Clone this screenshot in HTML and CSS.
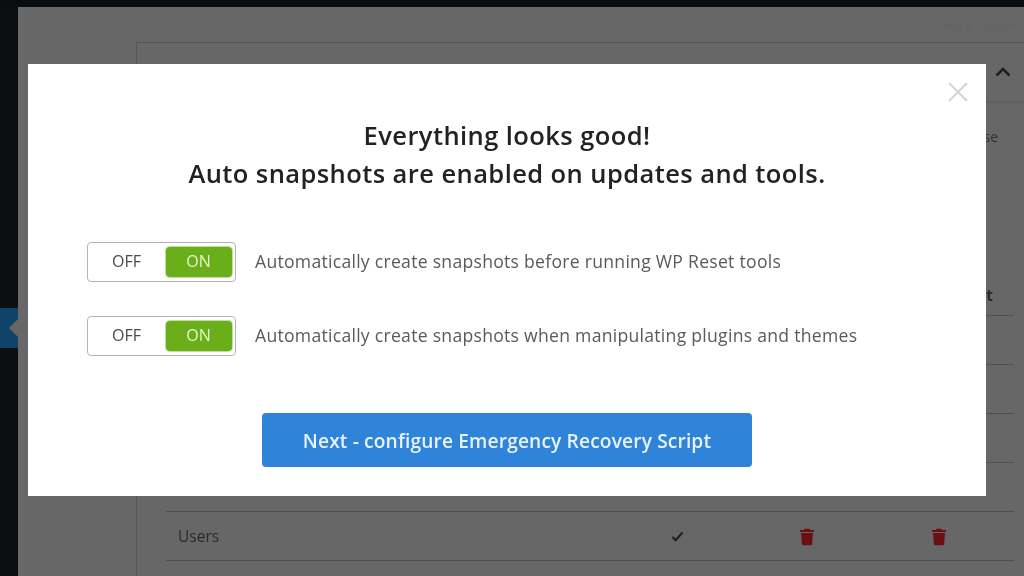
FILE: index.html
```html
<!DOCTYPE html>
<html lang="en">
<head>
<meta charset="utf-8">
<title>WP Reset</title>
<link rel="stylesheet" href="styles.css">
</head>
<body>
<div class="page">
  <div class="topbar"></div>
  <div class="shell">
    <aside class="sidebar">
      <div class="side-item"><span class="side-notch"></span></div>
    </aside>
    <main class="main">
      <div class="meta">Help &amp; Support</div>
      <section class="card">
        <header class="card-head">
          <svg class="chevron" viewBox="0 0 16 10" aria-hidden="true"><path d="M1.5 8.5 8 2l6.5 6.5" fill="none" stroke="#1f1f1f" stroke-width="2.6"/></svg>
        </header>
        <div class="card-body">
          <p class="intro">Snapshots are a point in time copy of the database</p>
          <div class="thead"><span></span><span></span><span></span><span class="th">Snapshot</span></div>
          <div class="trow"></div>
          <div class="trow"></div>
          <div class="trow"></div>
          <div class="trow"></div>
          <div class="trow">
            <span class="name">Users</span>
            <svg class="check" viewBox="0 0 14 12" aria-hidden="true"><path d="M1.5 6.5 5 10l7.5-8.5" fill="none" stroke="#1d1d1d" stroke-width="2.4"/></svg>
            <svg class="trash" viewBox="0 0 16 18" aria-hidden="true"><path fill="#6a1013" d="M5.5 1.2h5l.6 1.3H15v2H1v-2h3.9zM2 5.6h12l-.9 11a1.2 1.2 0 0 1-1.2 1.1H4.1a1.2 1.2 0 0 1-1.2-1.1z"/></svg>
            <svg class="trash" viewBox="0 0 16 18" aria-hidden="true"><path fill="#6a1013" d="M5.5 1.2h5l.6 1.3H15v2H1v-2h3.9zM2 5.6h12l-.9 11a1.2 1.2 0 0 1-1.2 1.1H4.1a1.2 1.2 0 0 1-1.2-1.1z"/></svg>
          </div>
        </div>
      </section>
    </main>
  </div>
</div>

<div class="modal">
  <svg class="close" viewBox="0 0 20 20" aria-hidden="true"><path d="M1 1l18 18M19 1 1 19" fill="none" stroke="#d4d4d4" stroke-width="2"/></svg>
  <h1 class="title">Everything looks good!<br>Auto snapshots are enabled on updates and tools.</h1>
  <div class="options">
    <div class="option">
      <div class="toggle"><span class="off">OFF</span><span class="on">ON</span></div>
      <span class="label">Automatically create snapshots before running WP Reset tools</span>
    </div>
    <div class="option">
      <div class="toggle"><span class="off">OFF</span><span class="on">ON</span></div>
      <span class="label">Automatically create snapshots when manipulating plugins and themes</span>
    </div>
  </div>
  <div class="actions"><button class="next" type="button">Next - configure Emergency Recovery Script</button></div>
</div>
</body>
</html>
```

FILE: styles.css
```css
* { box-sizing: border-box; }
html, body { margin: 0; height: 100%; }
body {
  width: 1024px;
  height: 576px;
  overflow: hidden;
  background: #676767;
  font-family: "Open Sans", "Noto Sans", sans-serif;
  color: #2a2a2a;
  filter: blur(0.35px);
}
.page { height: 576px; display: flex; flex-direction: column; overflow: hidden; }
.topbar { height: 7px; background: #0a0d10; flex: none; }
.shell { flex: 1; display: flex; min-height: 0; }
.sidebar { width: 18px; flex: none; background: #0b0f12; padding-top: 301px; }
.side-item { height: 40px; background: #0f4468; display: flex; align-items: center; justify-content: flex-end; }
.side-notch { width: 0; height: 0; border: 9px solid transparent; border-right-color: #676767; border-left-width: 0; }
.main { flex: 1; min-width: 0; background: #676767; padding: 35px 0 0 118px; position: relative; }
.meta { position: absolute; right: 6px; top: 11px; font-size: 11px; color: #636363; }
.card { border: 1px solid #555; border-right: 0; height: 600px; }
.card-head { height: 60px; border-bottom: 2px solid #5f5f5f; display: flex; align-items: center; justify-content: flex-end; padding-right: 13px; }
.chevron { width: 16px; height: 10px; margin-top: -1px; }
.card-body { padding: 0 10px 0 29px; }
.intro { margin: 0; height: 212px; padding: 24px 16px 0 0; text-align: right; font-size: 14px; line-height: 20px; color: #2f2f2f; white-space: nowrap; overflow: hidden; }
.thead, .trow { display: grid; align-items: center; justify-items: center; border-bottom: 1.5px solid #4f4f4f; height: 49px; font-size: 15.5px; color: #2b2b2b; }
.trow { grid-template-columns: 446px 130px 132px 132px; }
.thead { grid-template-columns: 446px 130px 132px 1fr; margin-top: -40px; height: 41px; font-weight: 700; }
.th { justify-self: end; padding-right: 21px; white-space: nowrap; }
.name { justify-self: start; padding-left: 12px; }
.check { width: 13px; height: 11px; }
.trash { width: 16px; height: 19px; margin-right: 2px; }
.modal {
  position: absolute;
  left: 28px;
  top: 64px;
  width: 958px;
  height: 432px;
  background: #fff;
  padding-top: 52px;
}
.close { position: absolute; left: 920px; top: 18px; width: 20px; height: 20px; }
.title { margin: 0; text-align: center; font-size: 25.5px; letter-spacing: 0.42px; line-height: 38px; font-weight: 600; color: #222; }
.options { margin: 50px 0 0 59px; display: flex; flex-direction: column; gap: 34px; }
.option { display: flex; align-items: center; gap: 19px; }
.toggle {
  width: 149px;
  height: 40px;
  border: 1.5px solid #b4b4b4;
  border-radius: 4px;
  background: #fff;
  display: flex;
  align-items: center;
  justify-content: space-between;
  padding: 3.5px;
  font-size: 16px;
}
.off { width: 70px; text-align: center; color: #4a4a4a; margin-bottom: 2px; }
.on { width: 66px; height: 30px; line-height: 28px; background: #6aae1a; border-radius: 4px; color: #e6f3d4; text-align: center; box-shadow: 0 0 0 1px #c4e09c; }
.label { font-size: 17.6px; letter-spacing: 0.27px; color: #5a5a5a; white-space: nowrap; margin-bottom: 2px; }
.actions { margin-top: 57px; display: flex; justify-content: center; }
.next {
  width: 490px;
  height: 54px;
  border: 0;
  border-radius: 4px;
  background: #2f83d9;
  color: #e6f3fd;
  font: 600 19.2px "Open Sans", "Noto Sans", sans-serif;
  letter-spacing: 0.13px;
}
```
